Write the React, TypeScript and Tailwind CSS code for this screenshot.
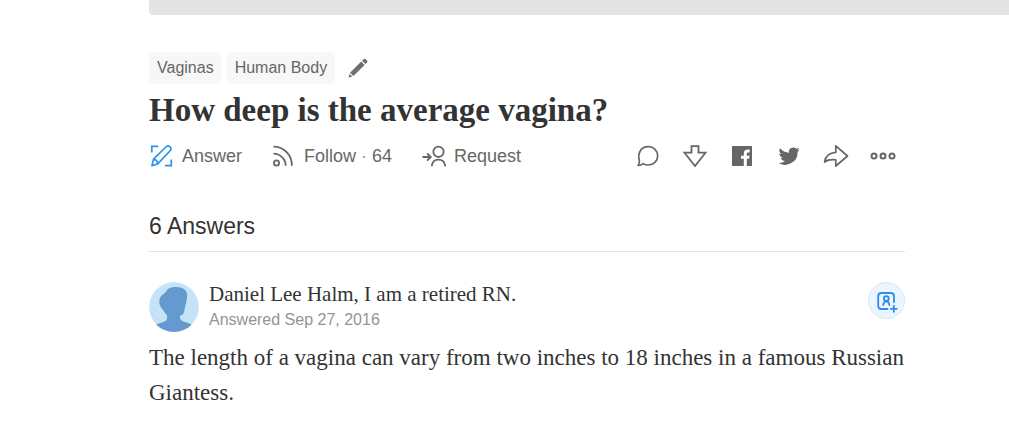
import type { ReactNode } from 'react'

const topics = ["Vaginas", "Human Body"]

const PencilIcon = () => (
  <svg width="20" height="20" viewBox="0 0 20 20" fill="#6f6f6f">
    <path d="M13.2 3.6l3.4 3.4L5.4 18.1 2 14.8zM14.1 2.7l1.6-1.6c.5-.5 1.2-.5 1.7 0l1.7 1.7c.5.5.5 1.2 0 1.7l-1.6 1.6zM1.4 15.8l2.9 2.9-3.7.9z" />
  </svg>
)

const AnswerIcon = () => (
  <svg width="24" height="24" viewBox="0 0 24 24" fill="none" stroke="#2e91f0" strokeWidth="1.7">
    <path d="M1.8 8.5V2.3h6.4M21.300 15.500v6.200h-6.400" />
    <path d="M2 21.700l1.500-6.500L15.900 3c1.300-1.200 3-1.200 4.100-.1s1.100 2.800-.1 4.100L7.700 19.900zM3.500 15.200c2.300.4 3.900 2.100 4.200 4.700" strokeLinejoin="round" />
  </svg>
)

const FollowIcon = () => (
  <svg width="24" height="24" viewBox="0 0 24 24" fill="none" stroke="#666" strokeWidth="1.8">
    <circle cx="4.500" cy="19" r="2.6" />
    <path d="M1.500 9.6c6.5 0 12.2 5.4 12.2 12.2M1.500 2.7c10.6 0 18.4 8.4 18.4 19.1" />
  </svg>
)

const RequestIcon = () => (
  <svg width="24" height="24" viewBox="0 0 24 24" fill="none" stroke="#666" strokeWidth="1.8">
    <circle cx="16.500" cy="7.8" r="5.2" />
    <path d="M9.800 22.3c.3-4.4 3-6.7 6.7-6.7s6.4 2.3 6.7 6.7M.5 13h8M5.1 9.3L8.8 13l-3.7 3.7" />
  </svg>
)

const CommentIcon = () => (
  <svg width="24" height="24" viewBox="0 0 24 24" fill="none" stroke="#666" strokeWidth="1.7" strokeLinejoin="round">
    <path d="M2.1 21.5c1.1-1.4 1.6-3 1.2-5C1.5 10.2 4.2 2.8 12.3 2.7c5.4 0 9.4 4 9.4 9.1 0 5.4-4.2 9.2-9.3 9.2-2 0-3.7-.5-5.1-1.4-1.5 1.2-3.2 1.8-5.2 1.9z" />
  </svg>
)

const DownvoteIcon = () => (
  <svg width="26" height="24" viewBox="0 0 26 24" fill="none" stroke="#666" strokeWidth="1.8" strokeLinejoin="miter">
    <path d="M9.500 2.100h7v6.600h7L13 22 2.500 8.700h7z" />
  </svg>
)

const FacebookIcon = () => (
  <svg width="24" height="24" viewBox="0 0 24 24" fill="#666">
    <path d="M3 2h18c.6 0 1 .4 1 1v18c0 .6-.4 1-1 1h-4.2v-7.2h2.4l.4-3.1h-2.8V9.9c0-1 .3-1.5 1.5-1.5h1.4V5.6c-.4-.1-1.2-.1-2.1-.1-2.4 0-3.8 1.4-3.8 3.9v2.3H11v3.1h2.8V22H3c-.6 0-1-.4-1-1V3c0-.6.4-1 1-1z" />
  </svg>
)

const TwitterIcon = () => (
  <svg width="22" height="22" viewBox="0 0 24 24" fill="#666">
    <path d="M23.6 4.9c-.8.4-1.7.6-2.7.8 1-.6 1.7-1.5 2.1-2.6-1 .5-1.9.9-3 1.1a4.8 4.8 0 0 0-8.1 4.3A13.4 13.4 0 0 1 2.2 3.6a4.8 4.8 0 0 0 1.5 6.3c-.8 0-1.5-.2-2.2-.6 0 2.4 1.6 4.3 3.8 4.8-.7.2-1.4.2-2.1.1.6 1.9 2.4 3.2 4.4 3.3A9.5 9.5 0 0 1 .6 19.5 13.5 13.5 0 0 0 21.3 7.5c.9-.7 1.7-1.6 2.3-2.6z" />
  </svg>
)

const ShareIcon = () => (
  <svg width="26" height="24" viewBox="0 0 26 24" fill="none" stroke="#666" strokeWidth="1.7" strokeLinejoin="round">
    <path d="M12.800 1.900L24.500 12 12.800 22v-6.200c-5.200-.4-8.600.2-11.200 2.200C2.400 12.600 6.200 8.800 12.800 8.400z" />
  </svg>
)

const MoreIcon = () => (
  <svg width="26" height="24" viewBox="0 0 26 24" fill="none" stroke="#666" strokeWidth="2">
    <circle cx="4" cy="12" r="2.5" />
    <circle cx="13" cy="12" r="2.5" />
    <circle cx="22" cy="12" r="2.5" />
  </svg>
)

const AddPersonIcon = () => (
  <svg width="24" height="24" viewBox="0 0 24 24" fill="none" stroke="#2e8ce6" strokeWidth="1.8" strokeLinecap="round">
    <path d="M12.500 20H6.500C4.400 20 3.200 18.800 3.200 16.700V7.200C3.200 5.100 4.400 4 6.500 4h9.200c2.100 0 3.300 1.100 3.300 3.200v6M18.800 16.800v6M15.800 19.800h6" />
    <circle cx="11.300" cy="9.600" r="2.400" />
    <path d="M8.300 16c.1-2.300 1.100-3.700 3-3.700s2.900 1.400 3 3.700" />
  </svg>
)

const Avatar = () => (
  <svg width="50" height="50" viewBox="0 0 50 50" className="shrink-0 rounded-full">
    <circle cx="25" cy="25" r="25" fill="#c5e3f7" />
    <path
      fill="#649ad0"
      d="M18.500 7.200C21 5.300 25 4.800 28 5c3 .3 6 1 7.500 2.500 2 1.500 3 4 2.600 6.500-.2 5-1.600 9-2.500 13-.5 2.500-.8 5.500-2.600 6-1.600.3-2 1-2 2 0 2.500.8 3.500 3.500 4.500 3 .8 5.800 1.700 8.200 3.200L38 50H12L7 42.700c2.800-1.500 6-2.200 8.500-3.200 2.600-1.200 3.200-3.500 2.300-6.500-1.300-1.500-2.500-2.500-3.500-4.500-1.500-2.500-3.800-4.500-4-7.500-.1-2.500.3-4.500 1.500-6.500 1.500-2.300 4.500-3 6.700-7.300z"
    />
  </svg>
)

function ActionButton({ icon, children }: { icon: ReactNode, children: ReactNode }) {
  return (
    <button type="button" className="flex items-center gap-2 whitespace-nowrap text-lg text-[#666]">
      {icon}
      <span>{children}</span>
    </button>
  )
}

function IconButton({ label, children }: { label: string, children: ReactNode }) {
  return (
    <button type="button" aria-label={label} className="flex h-6 w-7 items-center justify-center">
      {children}
    </button>
  )
}

export default function App() {
  return (
    <div className="bg-white pb-5 pl-[149px] font-['Liberation_Sans',Arial,sans-serif] text-[#333]">
      <div className="h-[15px] rounded-bl bg-[#e4e4e4]" />

      <main className="max-w-[756px] pt-[37px]">
        <div className="flex items-center gap-[5px]">
          {topics.map(topic => (
            <a key={topic} href="#" className="flex h-8 items-center rounded-md bg-[#f7f7f7] px-2 text-base text-[#666]">
              {topic}
            </a>
          ))}
          <button type="button" aria-label="Edit topics" className="ml-2">
            <PencilIcon />
          </button>
        </div>

        <h1 className="mt-2 font-['Liberation_Serif',serif] text-[33px] leading-9 font-bold">
          How deep is the average vagina?
        </h1>

        <div className="mt-[14px] flex items-center justify-between pr-2 pl-px">
          <div className="flex items-center gap-[30px]">
            <ActionButton icon={<AnswerIcon />}>Answer</ActionButton>
            <ActionButton icon={<FollowIcon />}>
              Follow <span className="text-[#999]">·</span> 64
            </ActionButton>
            <ActionButton icon={<RequestIcon />}>Request</ActionButton>
          </div>
          <div className="flex items-center gap-[19px]">
            <IconButton label="Comments"><CommentIcon /></IconButton>
            <IconButton label="Downvote"><DownvoteIcon /></IconButton>
            <IconButton label="Share on Facebook"><FacebookIcon /></IconButton>
            <IconButton label="Share on Twitter"><TwitterIcon /></IconButton>
            <IconButton label="Share"><ShareIcon /></IconButton>
            <IconButton label="More"><MoreIcon /></IconButton>
          </div>
        </div>

        <h2 className="mt-10 border-b border-[#e2e2e2] pb-[9px] text-[23px] leading-8">6 Answers</h2>

        <article className="pt-[30px]">
          <div className="flex items-start gap-[10px]">
            <Avatar />
            <div className="grow">
              <a href="#" className="block font-['Liberation_Serif',serif] text-[21px] leading-6">
                Daniel Lee Halm, I am a retired RN.
              </a>
              <a href="#" className="mt-1 block text-base leading-5 text-[#949494]">Answered Sep 27, 2016</a>
            </div>
            <button
              type="button"
              aria-label="Follow Daniel Lee Halm"
              className="flex size-[37px] items-center justify-center rounded-full border border-[#d3e9fb] bg-[#ebf5fe]"
            >
              <AddPersonIcon />
            </button>
          </div>
          <p className="mt-2 font-['Liberation_Serif',serif] text-[23px] leading-[35px]">
            The length of a vagina can vary from two inches to 18 inches in a famous Russian Giantess.
          </p>
        </article>
      </main>
    </div>
  )
}
